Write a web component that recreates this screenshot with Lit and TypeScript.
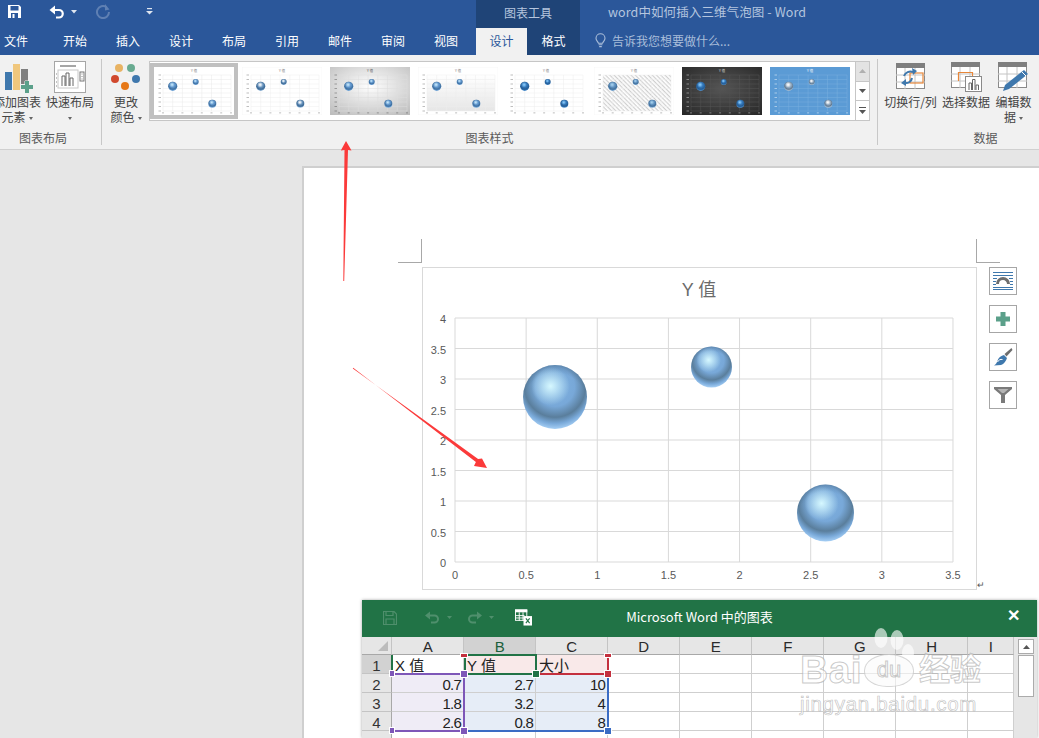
import { LitElement, html, css, svg } from "lit";
import { customElement } from "lit/decorators.js";

const TABS: [string, number][] = [["文件", 48.5], ["开始", 53], ["插入", 53], ["设计", 53], ["布局", 53], ["引用", 53], ["邮件", 53], ["审阅", 53], ["视图", 56.5]];
const COLS = ["A", "B", "C", "D", "E", "F", "G", "H", "I"];
type Cell = [string, string, string];
const ROWS: Cell[][] = [
  [["X 值", "l", ""], ["Y 值", "l", "pink"], ["大小", "l", "pink"]],
  [["0.7", "r", "lilac"], ["2.7", "r", "blue"], ["10", "r", "blue"]],
  [["1.8", "r", "lilac"], ["3.2", "r", "blue"], ["4", "r", "blue"]],
  [["2.6", "r", "lilac"], ["0.8", "r", "blue"], ["8", "r", "blue"]],
];
const PUR = "#7e57b8", BLU = "#3a6cc4", GRN = "#217346", RED = "#c4303e";
// selection outlines: x, y, width, height, colour (relative to the sheet)
const LINES: [number, number, number, number, string][] = [
  [31, 36, 70, 2, PUR], [101, 40, 2, 51, PUR], [31, 93, 70, 2, PUR],
  [105, 93, 139, 2, BLU], [245, 40, 2, 52, BLU],
  [176, 36, 68, 2, RED], [245, 20, 2, 13, RED],
  [103, 17, 72, 2, GRN], [173, 17, 2, 19, GRN], [104, 36, 69, 2, GRN], [102, 20, 2, 14, GRN], [29, 18, 2, 17, GRN],
];
const HANDLES: [number, number, number, number, string][] = [
  [28, 34, 4, 5, PUR], [99, 34, 6, 6, PUR], [28, 91, 4, 5, PUR], [99, 91, 6, 6, PUR],
  [171, 34, 6, 6, GRN], [243, 34, 6, 6, RED], [243, 91, 6, 6, BLU],
  [99, 17, 6, 3, RED], [243, 17, 6, 3, RED],
];

const sphereDefs = (id: string, top: string, mid: string, dark: string, rim: string, hi: string) => svg`
  <radialGradient id="${id}b" cx=".5" cy=".34" r=".68">
    <stop offset="0" stop-color="${top}"/><stop offset=".45" stop-color="${mid}"/>
    <stop offset=".7" stop-color="${dark}"/><stop offset=".84" stop-color="${mid}"/><stop offset=".97" stop-color="${rim}"/>
  </radialGradient>
  <radialGradient id="${id}h" cx=".43" cy=".33" r=".3">
    <stop offset="0" stop-color="${hi}"/><stop offset=".25" stop-color="${hi}" stop-opacity=".75"/><stop offset="1" stop-color="${hi}" stop-opacity="0"/>
  </radialGradient>
  <radialGradient id="${id}e" cx=".5" cy=".62" r=".62">
    <stop offset=".8" stop-color="#3f5f7c" stop-opacity="0"/><stop offset="1" stop-color="#3f5f7c" stop-opacity=".35"/>
  </radialGradient>`;

const sphere = (id: string, cx: number, cy: number, r: number) => svg`
  <circle cx="${cx}" cy="${cy}" r="${r}" fill="url(#${id}b)"/>
  <circle cx="${cx}" cy="${cy}" r="${r}" fill="url(#${id}e)"/>
  <circle cx="${cx}" cy="${cy}" r="${r}" fill="url(#${id}h)"/>`;

interface Thumb { bg: string; grid: string; text: string; top: string; mid: string; dark: string; rim: string; hi: string; hatch?: boolean; floor?: boolean; frame?: boolean; }
const blueS = { top: "#6aa0d4", mid: "#5a90c8", dark: "#3f6f9c", rim: "#7fb0de", hi: "#cdeeff" };
const deepS = { top: "#3f86c8", mid: "#2f72b4", dark: "#265c92", rim: "#5a9ad6", hi: "#8fd0ff" };
const silverS = { top: "#c8d4e0", mid: "#8fa6bc", dark: "#5f7a94", rim: "#b0c4d8", hi: "#ffffff" };
const THUMBS: Thumb[] = [
  { bg: "#ffffff", grid: "#e8e8e8", text: "#777", ...blueS },
  { bg: "#ffffff", grid: "#eeeeee", text: "#777", frame: true, top: "#a8c4de", mid: "#5f8cb8", dark: "#3f6a94", rim: "#a8c8e6", hi: "#ffffff" },
  { bg: "url(#tbg)", grid: "#dcdcdc", text: "#555", ...blueS },
  { bg: "#ffffff", grid: "#ececec", text: "#777", frame: true, floor: true, ...blueS },
  { bg: "#ffffff", grid: "#ececec", text: "#777", frame: false, ...deepS },
  { bg: "#ffffff", grid: "#eeeeee", text: "#777", hatch: true, frame: true, top: "#7aa6cf", mid: "#5a8dbd", dark: "#44709a", rim: "#86b2da", hi: "#a8d4f0" },
  { bg: "url(#tdk)", grid: "#555555", text: "#ddd", ...deepS },
  { bg: "#5b9bd5", grid: "#79aede", text: "#fff", ...silverS },
];

const thumb = (t: Thumb, i: number) => {
  const id = `t${i}`;
  const xs = [9, 18.7, 28.4, 38.1, 47.8, 57.5, 67.2, 77];
  const ys = [8, 12.5, 17, 21.5, 26, 30.5, 35, 39.5, 44];
  return html`<svg class="thumb" viewBox="0 0 80 48" width="80" height="48">
    <defs>
      ${sphereDefs(id, t.top, t.mid, t.dark, t.rim, t.hi)}
      <radialGradient id="tbg" cx=".5" cy=".4" r=".75"><stop offset="0" stop-color="#ffffff"/><stop offset="1" stop-color="#bdbdbd"/></radialGradient>
      <radialGradient id="tdk" cx=".5" cy=".45" r=".75"><stop offset="0" stop-color="#555555"/><stop offset="1" stop-color="#262626"/></radialGradient>
      <linearGradient id="tfl" x1="0" y1="0" x2="0" y2="1"><stop offset="0" stop-color="#fff"/><stop offset="1" stop-color="#e6e6e6"/></linearGradient>
      <pattern id="thatch" width="3" height="3" patternUnits="userSpaceOnUse" patternTransform="rotate(45)"><rect width="3" height="1.2" fill="#cfcfcf"/></pattern>
    </defs>
    <rect width="80" height="48" fill="${t.bg}" stroke="${t.frame ? "#f0f0f0" : "none"}" stroke-width=".5"/>
    ${t.floor ? svg`<rect x="9" y="8" width="68" height="36" fill="url(#tfl)"/>` : ""}
    ${t.hatch ? svg`<rect x="9" y="8" width="68" height="36" fill="url(#thatch)"/>` : ""}
    ${xs.map((x) => svg`<line x1="${x}" x2="${x}" y1="8" y2="44" stroke="${t.grid}" stroke-width=".5"/>`)}
    ${ys.map((y) => svg`<line x1="9" x2="77" y1="${y}" y2="${y}" stroke="${t.grid}" stroke-width=".5"/>`)}
    <text x="40" y="5" font-size="3.4" text-anchor="middle" fill="${t.text}" font-family="Liberation Sans, Noto Sans CJK SC, sans-serif">Y 值</text>
    ${ys.map((y) => svg`<rect x="4.5" y="${y - 0.4}" width="2.5" height=".8" fill="${t.text}" opacity=".6"/>`)}
    ${xs.map((x) => svg`<rect x="${x - 1}" y="45.5" width="2" height=".8" fill="${t.text}" opacity=".6"/>`)}
    ${sphere(id, 18.7, 19.3, 4.6)}${sphere(id, 41.7, 15, 3)}${sphere(id, 58.3, 36.7, 4)}
  </svg>`;
};

const chartSvg = () => {
  const X0 = 33, Y0 = 295, PX = 71.14, PY = 30.5;
  const xl = ["0", "0.5", "1", "1.5", "2", "2.5", "3", "3.5"];
  const yl = ["0", "0.5", "1", "1.5", "2", "2.5", "3", "3.5", "4"];
  return html`<svg class="chart-svg" width="555" height="323" viewBox="0 0 555 323">
    <defs>${sphereDefs("m", "#7fb2e2", "#78a8d8", "#5a7e9c", "#a6cff5", "#d6f8ff")}</defs>
    <text x="277" y="29" text-anchor="middle" font-size="18" fill="#6b6b6b" font-family="Liberation Sans, Noto Sans CJK SC, sans-serif">Y 值</text>
    ${xl.map((l, i) => svg`<line x1="${X0 + i * PX}" x2="${X0 + i * PX}" y1="51" y2="${Y0}" stroke="#d9d9d9"/>
      <text x="${X0 + i * PX}" y="${Y0 + 17}" text-anchor="middle" class="ax">${l}</text>`)}
    ${yl.map((l, i) => svg`<line x1="${X0}" x2="${X0 + 7 * PX}" y1="${Y0 - i * PY}" y2="${Y0 - i * PY}" stroke="#d9d9d9"/>
      <text x="${X0 - 9}" y="${Y0 - i * PY + 5}" text-anchor="end" class="ax">${l}</text>`)}
    ${sphere("m", 133, 130, 32)}${sphere("m", 289.5, 100, 20.5)}${sphere("m", 403.5, 246, 28.5)}
  </svg>`;
};

@customElement("app-root")
export class AppRoot extends LitElement {
  static styles = css`
    :host { display: block; width: 1039px; height: 738px; }
    * { box-sizing: border-box; }
    .app { position: relative; width: 1039px; height: 738px; overflow: hidden; display: flex; flex-direction: column; background: #e6e6e6; font: 12px/15px "Noto Sans CJK SC", "Liberation Sans", sans-serif; color: #444; }
    .titlebar { height: 28px; background: #2b579a; display: flex; align-items: stretch; flex: none; }
    .qat { width: 476px; display: flex; align-items: center; flex: none; padding: 0 0 5px 7px; }
    .qat svg { display: block; flex: none; }
    .context { width: 104px; flex: none; background: #1f4477; color: #b6c6de; display: flex; align-items: center; justify-content: center; padding-bottom: 4px; }
    .doc-title { padding: 0 0 5px 28px; color: #b4c5df; display: flex; align-items: center; font-size: 12.5px; letter-spacing: .1px; }
    .tabs { height: 27px; background: #2b579a; display: flex; flex: none; color: #fff; }
    .tab { display: flex; align-items: center; justify-content: center; flex: none; padding-bottom: 2px; }
    .tab.first { justify-content: flex-start; padding-left: 4px; }
    .tab.last { justify-content: flex-start; padding-left: 14.500px; }
    .tab.active { width: 51px; background: #f1f1f1; color: #2b579a; }
    .tab.fmt { width: 53px; background: #1f4477; }
    .tell { display: flex; align-items: center; gap: 6px; padding: 0 0 2px 15px; color: #a9bdd9; }
    .ribbon { height: 95px; flex: none; background: #f1f1f1; border-bottom: 1px solid #d0d0d0; display: flex; overflow: hidden; }
    .group { height: 86px; margin-top: 4px; border-right: 1px solid #c8c8c8; flex: none; display: flex; flex-direction: column; }
    .g1 { width: 102px; }
    .g2 { width: 776px; }
    .g3 { flex: 1; border-right: none; min-width: 0; }
    .body { height: 71px; display: flex; flex: none; }
    .g1 .body { gap: 5px; }
    .g3 .body { padding-left: 6px; gap: 5px; }
    .label { text-align: center; line-height: 16px; color: #5a5a5a; height: 15px; }
    .g1 .label { padding-right: 15px; }
    .rb { flex: none; display: flex; flex-direction: column; align-items: center; text-align: center; }
    .rb .ic { height: 35px; display: flex; align-items: center; justify-content: center; }
    .rb .ic svg { display: block; overflow: visible; }
    .caret { display: inline-block; width: 0; height: 0; border-left: 2.5px solid transparent; border-right: 2.5px solid transparent; border-top: 3px solid #666; vertical-align: middle; margin-left: 3px; }
    .w-add { width: 48px; margin-left: -7px; }
    .w-quick { width: 48px; }
    .w-color { width: 32px; margin-left: 8px; }
    .w-sw { width: 53px; }
    .w-sel { width: 48px; }
    .w-edit { width: 37px; }
    .w-ref { width: 48px; margin-left: 4px; }
    .gallery { margin: 2px 0 0 7px; height: 60px; width: 707px; flex: none; border: 1px solid #c6c6c6; background: #fff; padding: 1px 0 1px 0; display: flex; }
    .item { width: 88px; height: 56px; padding: 4px; flex: none; }
    .item.sel { background: #c0c0c0; }
    .thumb { display: block; }
    .spin { margin-top: 2px; width: 14px; height: 60px; flex: none; border: 1px solid #c6c6c6; border-left: none; display: flex; flex-direction: column; background: #fff; }
    .spin div { flex: 1; display: flex; align-items: center; justify-content: center; border-bottom: 1px solid #c6c6c6; }
    .spin div:last-child { border-bottom: none; }
    .spin .off { background: #e3e3e3; }
    .workspace { flex: 1; min-height: 0; padding: 16px 0 0 302px; overflow: hidden; }
    .page { background: #fff; border-left: 2px solid #cfcfcf; border-top: 2px solid #cfcfcf; height: 600px; padding: 99px 0 0 118px; }
    .chart-row { position: relative; display: flex; gap: 12px; align-items: flex-start; }
    .chart { width: 555px; height: 323px; background: #fff; border: 1px solid #d9d9d9; flex: none; }
    .chart-svg { display: block; margin: -1px; }
    .ax { font: 11px "Liberation Sans", sans-serif; fill: #595959; }
    .crop { position: absolute; border-color: #a8a8a8; border-style: solid; width: 24px; height: 24px; top: -28px; }
    .crop.a { left: -24px; border-width: 0 1px 1px 0; }
    .crop.b { left: 554px; border-width: 0 0 1px 1px; }
    .ret { position: absolute; left: 555px; top: 313px; font: 9px/10px "Liberation Sans", sans-serif; color: #555; }
    .tools { display: flex; flex-direction: column; gap: 10px; }
    .tool { width: 28px; height: 28px; background: #fff; border: 1px solid #a6a6a6; display: flex; align-items: center; justify-content: center; }
    .tool svg { display: block; }
    .excel { position: absolute; left: 362px; top: 600px; width: 675px; height: 138px; background: #e6e6e6; box-shadow: 0 0 3px rgba(0,0,0,.35); display: flex; flex-direction: column; }
    .xtitle { height: 37px; flex: none; background: #217346; position: relative; display: flex; align-items: center; justify-content: center; color: #fff; font-size: 13px; padding-bottom: 4px; }
    .xqat { position: absolute; left: 21px; top: -1px; height: 37px; display: flex; align-items: center; }
    .xqat svg { display: block; flex: none; }
    .xclose { position: absolute; right: 17px; top: 7px; font: bold 16px/18px "Liberation Sans", sans-serif; color: #fff; }
    .sheet { flex: 1; min-height: 0; display: flex; overflow: hidden; }
    .gridwrap { position: relative; width: 652px; flex: none; overflow: hidden; background: #fff; }
    .grid { display: grid; grid-template-columns: 30px repeat(8, 72px) 46px; grid-template-rows: 18px repeat(5, 19px); font: 15px/21px "Liberation Sans", "Noto Sans CJK SC", sans-serif; color: #222; }
    .hd { background: #e6e6e6; border-right: 1px solid #c4c4c4; border-bottom: 1px solid #a8a8a8; display: flex; align-items: center; justify-content: center; font-size: 15px; color: #2a2a2a; padding-top: 1px; letter-spacing: -.5px; }
    .hd.on { background: #d2d2d2; color: #1d5f3c; }
    .corner { position: relative; }
    .corner::after { content: ""; position: absolute; right: 3px; bottom: 3px; border-left: 10px solid transparent; border-bottom: 10px solid #bcbcbc; }
    .rn { background: #e6e6e6; border-right: 1px solid #a8a8a8; border-bottom: 1px solid #c4c4c4; display: flex; align-items: center; justify-content: center; font-size: 15px; color: #333; padding-top: 3px; }
    .rn.on { background: #d2d2d2; color: #333; }
    .c { border-right: 1px solid #cfcfcf; border-bottom: 1px solid #cfcfcf; padding: 0 3px; white-space: nowrap; overflow: hidden; }
    .c.r { text-align: right; padding-right: 2px; letter-spacing: -.8px; }
    .c.pink { background: #f9e9e9; }
    .c.lilac { background: #efecf6; }
    .c.blue { background: #e6edf7; }
    .line { position: absolute; }
    .hdl { position: absolute; outline: 1px solid #fff; }
    .sb { flex: 1; padding: 2px 3px 0 4px; display: flex; flex-direction: column; }
    .sb .btn { height: 15px; background: #fff; border: 1px solid #ababab; display: flex; align-items: center; justify-content: center; }
    .sb .thumbbar { height: 42px; margin-top: 1px; background: #fff; border: 1px solid #ababab; }
    .wm { position: absolute; left: 800px; top: 627px; width: 190px; pointer-events: none; display: flex; flex-direction: column; align-items: flex-start; }
    .wm svg { display: block; margin-left: 60px; overflow: visible; }
    .wm-row { display: flex; align-items: center; height: 34px; margin-top: -1px; }
    .wt { color: rgba(255,255,255,.62); -webkit-text-stroke: 1px rgba(165,165,165,.6); white-space: nowrap; font-family: "Liberation Sans", "Noto Sans CJK SC", sans-serif; }
    .wm-bai { font-size: 39px; line-height: 34px; font-weight: bold; letter-spacing: .5px; width: 64px; }
    .wm-du { width: 50px; height: 33px; border-radius: 50% 50% 46% 46%; background: rgba(250,250,250,.6); border: 1px solid rgba(175,175,175,.5); display: flex; align-items: center; justify-content: center; font-size: 22px; line-height: 22px; }
    .wm-jy { font-size: 31px; line-height: 34px; font-weight: bold; margin-left: 5px; }
    .wm-b { font-size: 20.500px; line-height: 22px; margin-top: 6px; letter-spacing: .7px; -webkit-text-stroke: .7px rgba(165,165,165,.65); }
    .marks { position: absolute; left: 0; top: 0; pointer-events: none; }
  `;

  render() {
    return html`<div class="app">
      <div class="titlebar">
        <div class="qat">
          <svg width="15" height="15" viewBox="0 0 15 15"><path d="M1 1h11l2 2v11H1z" fill="#fff"/><rect x="3.500" y="2" width="8" height="4.500" fill="#2b579a"/><rect x="4" y="9" width="7" height="5" fill="#2b579a"/><rect x="5.500" y="10" width="2" height="4" fill="#fff"/></svg>
          <svg style="margin-left:27px" width="16" height="14" viewBox="0 0 16 14"><path d="M4.500 5H10a3.700 3.700 0 0 1 0 7.500H7" fill="none" stroke="#fff" stroke-width="2.200"/><path d="M0.500 5 6 .5v9z" fill="#fff"/></svg>
          <svg style="margin-left:6px" width="6" height="4" viewBox="0 0 6 4"><path d="M0 0h6L3 3.500z" fill="#dfe6f0"/></svg>
          <svg style="margin-left:19px" width="15" height="15" viewBox="0 0 15 15"><path d="M10.500 3.200A6 6 0 1 0 13 8" fill="none" stroke="#5f80b3" stroke-width="2"/><path d="M9 0v6.500l4.500-1z" fill="#5f80b3"/></svg>
          <svg style="margin-left:35px" width="7" height="7" viewBox="0 0 7 7"><rect x="1" y="0" width="5" height="1.200" fill="#dfe6f0"/><path d="M0 3h7L3.500 6.500z" fill="#dfe6f0"/></svg>
        </div>
        <div class="context">图表工具</div>
        <div class="doc-title">word中如何插入三维气泡图 - Word</div>
      </div>
      <div class="tabs">
        ${TABS.map(([t, w], i) => html`<div class="tab ${i === 0 ? "first" : ""} ${i === TABS.length - 1 ? "last" : ""}" style="width:${w}px">${t}</div>`)}
        <div class="tab active">设计</div>
        <div class="tab fmt">格式</div>
        <div class="tell">
          <svg width="11" height="15" viewBox="0 0 11 15"><path d="M3.400 10.200C2.800 8.400 1 7.600 1 5.200a4.500 4.500 0 0 1 9 0c0 2.400-1.800 3.200-2.400 5z" fill="none" stroke="#a9bdd9" stroke-width="1.100"/><path d="M3.600 11.800h3.800M4.200 13.600h2.600" stroke="#a9bdd9" stroke-width="1.100"/></svg>
          <span>告诉我您想要做什么...</span>
        </div>
      </div>
      <div class="ribbon">
        <div class="group g1">
          <div class="body">
            <div class="rb w-add">
              <div class="ic"><svg width="30" height="30" viewBox="0 0 30 30"><rect x="3" y="10" width="7" height="18" fill="#3f78ad"/><rect x="11" y="2" width="7" height="26" fill="#f0c77d"/><rect x="19" y="7" width="7" height="15" fill="#7f7f7f"/><path d="M23 19h4v4h4v4h-4v4h-4v-4h-4v-4h4z" fill="#5ba08a" stroke="#f1f1f1" stroke-width="1" paint-order="stroke"/></svg></div>
              <div>添加图表</div><div>元素<span class="caret"></span></div>
            </div>
            <div class="rb w-quick">
              <div class="ic"><svg width="32" height="32" viewBox="0 0 32 32"><rect x=".5" y=".5" width="31" height="31" fill="#fff" stroke="#a6a6a6"/><rect x="6" y="4" width="16" height="2" fill="#a6a6a6"/><rect x="4" y="9" width="20" height="18" fill="none" stroke="#c8c8c8"/><path d="M8 25V15h3v10M12 25V12h3v13M16 25V17h3v8" fill="#fff" stroke="#666"/><rect x="26" y="11" width="4" height="9" fill="none" stroke="#777"/><path d="M2 13h1M2 17h1M2 21h1M2 25h1M27.500 13h1M27.500 15.500h1M27.500 18h1" stroke="#888"/></svg></div>
              <div>快速布局</div><div><span class="caret" style="margin:0"></span></div>
            </div>
          </div>
          <div class="label">图表布局</div>
        </div>
        <div class="group g2">
          <div class="body">
            <div class="rb w-color">
              <div class="ic"><svg width="30" height="28" viewBox="0 0 30 28"><circle cx="8" cy="5" r="4" fill="#e8b363"/><circle cx="20" cy="5" r="4" fill="#69ab91"/><circle cx="4" cy="16" r="4" fill="#d1492e"/><circle cx="25" cy="16" r="4" fill="#3f78ad"/><circle cx="14" cy="23" r="4" fill="#e67817"/></svg></div>
              <div>更改</div><div>颜色<span class="caret"></span></div>
            </div>
            <div class="gallery">
              ${THUMBS.map((t, i) => html`<div class="item ${i === 0 ? "sel" : ""}">${thumb(t, i)}</div>`)}
            </div>
            <div class="spin">
              <div class="off"><svg width="7" height="4" viewBox="0 0 7 4"><path d="M3.500 0 7 4H0z" fill="#b0b0b0"/></svg></div>
              <div><svg width="7" height="4" viewBox="0 0 7 4"><path d="M0 0h7L3.500 4z" fill="#555"/></svg></div>
              <div><svg width="7" height="7" viewBox="0 0 7 7"><rect width="7" height="1" fill="#555"/><path d="M0 3h7L3.500 7z" fill="#555"/></svg></div>
            </div>
          </div>
          <div class="label">图表样式</div>
        </div>
        <div class="group g3">
          <div class="body">
            <div class="rb w-sw">
              <div class="ic"><svg width="30" height="28" viewBox="0 0 30 28"><rect x=".5" y=".5" width="28" height="25" fill="#fff" stroke="#8a8a8a"/><rect width="29" height="5" fill="#7f7f7f"/><path d="M0 12h29M0 19h29M9 5v21M19 5v21" stroke="#c4c4c4"/><rect x="14" y="10" width="13" height="10" fill="none" stroke="#e8873a" stroke-width="1.200"/><path d="M8 13a7 7 0 0 1 9-4" fill="none" stroke="#3f78ad" stroke-width="2"/><path d="M16 5l5 3-4 4z" fill="#3f78ad"/><path d="M16 15a6 6 0 0 1-7 5" fill="none" stroke="#3f78ad" stroke-width="2"/><path d="M10 16l-5 4 5 3z" fill="#3f78ad"/></svg></div>
              <div>切换行/列</div>
            </div>
            <div class="rb w-sel">
              <div class="ic"><svg width="31" height="30" viewBox="0 0 31 30"><rect x=".5" y=".5" width="28" height="25" fill="#fff" stroke="#8a8a8a"/><rect width="29" height="5" fill="#7f7f7f"/><path d="M0 12h29M0 19h29M9 5v21M19 5v21" stroke="#c4c4c4"/><path d="M7.500 19V10.500H21.500V14" fill="none" stroke="#e8873a" stroke-width="1.200"/><rect x="14.500" y="14.500" width="16" height="15" fill="#fff" stroke="#8a8a8a"/><path d="M18 28V21h2.500v7M21.500 28V17.500H24V28M25 28V23h2.500v5" fill="#fff" stroke="#666"/></svg></div>
              <div>选择数据</div>
            </div>
            <div class="rb w-edit">
              <div class="ic"><svg width="31" height="30" viewBox="0 0 31 30"><rect x=".5" y=".5" width="28" height="25" fill="#fff" stroke="#8a8a8a"/><rect width="29" height="5" fill="#7f7f7f"/><path d="M0 12h29M0 19h29M9 5v21M19 5v21" stroke="#c4c4c4"/><path d="M26 8l4 4L11 27l-6 2 2-6z" fill="#3f78ad"/><path d="M24 10l4 4" stroke="#fff"/></svg></div>
              <div>编辑数</div><div>据<span class="caret"></span></div>
            </div>
            <div class="rb w-ref"><div class="ic"></div><div style="white-space:nowrap">刷新数据</div></div>
          </div>
          <div class="label" style="width:215px">数据</div>
        </div>
      </div>
      <div class="workspace">
        <div class="page">
          <div class="chart-row">
            <i class="crop a"></i><i class="crop b"></i>
            <div class="chart">${chartSvg()}</div>
            <span class="ret">↵</span>
            <div class="tools">
              <div class="tool"><svg width="20" height="20" viewBox="0 0 20 20"><path d="M0 1.500h20M0 4.500h20M0 7.500h4M16 7.500h4M0 10.500h3M17 10.500h3M0 13.500h3M17 13.500h3M0 16.500h20M0 18.500h20" stroke="#3f78ad"/><path d="M4.500 13a5.500 5.500 0 0 1 11 0" fill="none" stroke="#6e6e6e" stroke-width="3"/></svg></div>
              <div class="tool"><svg width="16" height="16" viewBox="0 0 16 16"><path d="M5.500 1h5v4.500H15v5h-4.500V15h-5v-4.500H1v-5h4.500z" fill="#5ba08a"/></svg></div>
              <div class="tool"><svg width="20" height="20" viewBox="0 0 20 20"><path d="M19 1l-7 6 2 2.500 6-6.500z" fill="#6e6e6e" transform="translate(-.5 0)"/><path d="M11 8l3 3c-1 3-3 6-6 7l-7 .5c2-1 3-3 4-6 1-2 3-4 6-4.500z" fill="#3f78ad"/><path d="M4.500 15c1-2 3-3 5-2.500" fill="none" stroke="#fff"/></svg></div>
              <div class="tool"><svg width="18" height="18" viewBox="0 0 18 18"><path d="M0 1h18v2l-7 6v8H7V9L0 3z" fill="#7a7a7a"/><path d="M3.500 3h11L10 7H8z" fill="#b5b5b5"/></svg></div>
            </div>
          </div>
        </div>
      </div>

      <div class="excel">
        <div class="xtitle">
          <div class="xqat">
            <svg width="14" height="14" viewBox="0 0 14 14"><path d="M.5.500h10.500l2.500 2.500v10.500H.5zM3 .5v4h7v-4M3 13.500V8h8v5.500" fill="none" stroke="#4f8f6c" stroke-width="1.200"/></svg>
            <svg style="margin-left:28px" width="15" height="13" viewBox="0 0 15 13"><path d="M4 4.500h5.500a3.500 3.500 0 0 1 0 7H6" fill="none" stroke="#4f8f6c" stroke-width="2"/><path d="M0 4.500 5 .5v8z" fill="#4f8f6c"/></svg>
            <svg style="margin-left:7px" width="5" height="3" viewBox="0 0 5 3"><path d="M0 0h5L2.500 3z" fill="#4f8f6c"/></svg>
            <svg style="margin-left:15px;transform:scaleX(-1)" width="15" height="13" viewBox="0 0 15 13"><path d="M4 4.500h5.500a3.500 3.500 0 0 1 0 7H6" fill="none" stroke="#4f8f6c" stroke-width="2"/><path d="M0 4.500 5 .5v8z" fill="#4f8f6c"/></svg>
            <svg style="margin-left:7px" width="5" height="3" viewBox="0 0 5 3"><path d="M0 0h5L2.500 3z" fill="#4f8f6c"/></svg>
            <svg style="margin-left:21px" width="17" height="17" viewBox="0 0 18 17"><rect x=".5" y=".5" width="12" height="11" fill="none" stroke="#fff"/><rect x="0" y="0" width="13" height="3" fill="#fff"/><path d="M0 6.500h10M0 9h10M4.500 3v9M8.500 3v9" stroke="#fff"/><rect x="9" y="7" width="9" height="10" fill="#fff"/><path d="M11.500 9.500l4 5M15.500 9.500l-4 5" stroke="#217346" stroke-width="1.200"/></svg>
          </div>
          <span>Microsoft Word 中的图表</span>
          <span class="xclose">✕</span>
        </div>
        <div class="sheet">
          <div class="gridwrap">
            <div class="grid">
              <div class="hd corner"></div>
              ${COLS.map((c) => html`<div class="hd ${c === "B" ? "on" : ""}">${c}</div>`)}
              ${[0, 1, 2, 3, 4].map((r) => html`
                <div class="rn ${r === 0 ? "on" : ""}">${r < 4 ? r + 1 : ""}</div>
                ${COLS.map((_, ci) => {
                  const cell = ROWS[r] && ROWS[r][ci];
                  return cell ? html`<div class="c ${cell[1]} ${cell[2]}">${cell[0]}</div>` : html`<div class="c"></div>`;
                })}`)}
            </div>
            ${LINES.map(([x, y, w, h, c]) => html`<div class="line" style="left:${x}px;top:${y}px;width:${w}px;height:${h}px;background:${c}"></div>`)}
            ${HANDLES.map(([x, y, w, h, c]) => html`<div class="hdl" style="left:${x}px;top:${y}px;width:${w}px;height:${h}px;background:${c}"></div>`)}
          </div>
          <div class="sb">
            <div class="btn"><svg width="7" height="4" viewBox="0 0 7 4"><path d="M3.500 0 7 4H0z" fill="#555"/></svg></div>
            <div class="thumbbar"></div>
          </div>
        </div>
      </div>

      <div class="wm">
        <svg width="60" height="27" viewBox="0 0 60 27" fill="rgba(255,255,255,.62)">
          <ellipse cx="21" cy="11" rx="6.500" ry="10"/><ellipse cx="37" cy="13" rx="6.500" ry="10"/><ellipse cx="48" cy="26" rx="6" ry="9"/>
        </svg>
        <div class="wm-row">
          <span class="wt wm-bai">Bai</span>
          <span class="wt wm-du">du</span>
          <span class="wt wm-jy">经验</span>
        </div>
        <div class="wt wm-b">jingyan.baidu.com</div>
      </div>

      <svg class="marks" width="1039" height="738" viewBox="0 0 1039 738">
        <path d="M343.300 281 344.200 281 348 150 351.500 150.500 346 141 340.800 150.500 344.500 150z" fill="#fb3a3a"/>
        <path d="M352.800 368.400 478.100 459 482 458.500 487 468 474 466 475.900 462 353.200 367.700z" fill="#fb3a3a"/>
      </svg>
    </div>`;
  }
}
